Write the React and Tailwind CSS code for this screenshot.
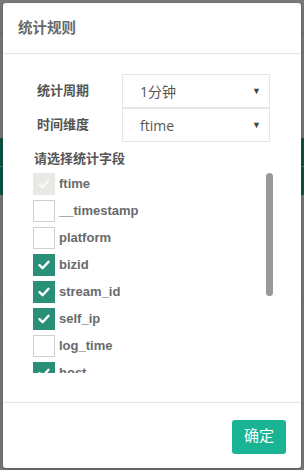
import { useState } from 'react';

const FIELDS = [
  { name: 'ftime', state: 'disabled' },
  { name: '__timestamp', state: 'off' },
  { name: 'platform', state: 'off' },
  { name: 'bizid', state: 'on' },
  { name: 'stream_id', state: 'on' },
  { name: 'self_ip', state: 'on' },
  { name: 'log_time', state: 'off' },
  { name: 'host', state: 'on' },
];

const cjk = "font-['Liberation_Sans','Noto_Sans_CJK_SC',sans-serif]";

const Check = ({ color }) => (
  <svg width="14" height="14" viewBox="0 0 14 14" fill="none">
    <path d="M2.5 7.2 L5.6 10.2 L11.5 3.8" stroke={color} strokeWidth="2.4" strokeLinecap="round" strokeLinejoin="round" />
  </svg>
);

const FieldRow = ({ name, state, onToggle }) => {
  let box = 'border border-[#cfcfcf] bg-white';
  if (state === 'on') box = 'bg-[#2a8f78]';
  if (state === 'disabled') box = 'bg-[#e8e8e5]';
  return (
    <div className="flex items-center h-[27px] gap-[4px] shrink-0 cursor-pointer" onClick={onToggle}>
      <div className={`w-[22px] h-[22px] flex items-center justify-center ${box}`}>
        {state === 'on' && <Check color="#ffffff" />}
        {state === 'disabled' && <Check color="#f7f7f5" />}
      </div>
      <span className="text-[13px] font-bold text-[#676a6c] leading-none">{name}</span>
    </div>
  );
};

const SelectBox = ({ value }) => (
  <div className="w-[148px] h-[34px] border border-[#e5e6e7] flex items-center justify-between pl-[17px] pr-[8px]">
    <span className={`text-[14px] text-[#555] font-['Open_Sans','Noto_Sans_CJK_SC',sans-serif]`}>{value}</span>
    <span className="text-[9px] text-[#444] leading-none">▼</span>
  </div>
);

export default function App() {
  const [fields, setFields] = useState(FIELDS);

  const toggle = (i) => {
    setFields((prev) =>
      prev.map((f, idx) =>
        idx === i && f.state !== 'disabled' ? { ...f, state: f.state === 'on' ? 'off' : 'on' } : f
      )
    );
  };

  return (
    <div className={`relative w-[304px] h-[470px] bg-[#7b7b7b] overflow-hidden ${cjk}`}>
      {/* page behind the overlay */}
      <div className="absolute left-0 right-0 top-[32px] h-px bg-[#6f6f6f]" />
      <div className="absolute left-0 right-0 top-[138px] h-[57px] bg-[#0f5446]" />
      <div className="absolute left-0 right-0 top-[166px] h-px bg-[#3d7a6c]" />
      <div className="absolute left-0 right-0 top-[300px] h-px bg-[#6f6f6f]" />

      <div className="relative p-[3px]">
        <div className="w-[298px] h-[465px] bg-white rounded-[3px] flex flex-col shadow-[0_2px_6px_rgba(0,0,0,0.3)]">
          {/* header */}
          <div className="h-[51px] flex items-center px-[15px] border-b border-[#e5e5e5] shrink-0">
            <span className="text-[14.5px] font-semibold text-[#676a6c] pt-[1px]">统计规则</span>
          </div>

          {/* body */}
          <div className="flex-1 flex flex-col pt-[20px] pl-[30px] pr-[28px] border-b border-[#e5e5e5] min-h-0">
            <div className="flex items-center">
              <span className="w-[89px] pl-[4px] text-[13px] font-bold text-[#555]">统计周期</span>
              <SelectBox value="1分钟" />
            </div>
            <div className="flex items-center">
              <span className="w-[89px] pl-[4px] text-[13px] font-bold text-[#555]">时间维度</span>
              <SelectBox value="ftime" />
            </div>
            <div className="pt-[8px] text-[13px] font-bold text-[#555] leading-[18px] pl-[1px]">请选择统计字段</div>
            <div className="flex mt-[2px] h-[203px] overflow-hidden">
              <div className="flex-1 flex flex-col overflow-hidden">
                {fields.map((f, i) => (
                  <FieldRow key={f.name} name={f.name} state={f.state} onToggle={() => toggle(i)} />
                ))}
              </div>
              <div className="w-[7px] pt-[3px]">
                <div className="h-[123px] w-[7px] rounded-[4px] bg-[#999]" />
              </div>
            </div>
          </div>

          {/* footer */}
          <div className="h-[65px] flex items-center justify-end px-[15px] shrink-0">
            <button className="w-[54px] h-[34px] rounded-[3px] bg-[#1ab394] text-white text-[15px] mt-[2px]">
              确定
            </button>
          </div>
        </div>
      </div>
    </div>
  );
}
